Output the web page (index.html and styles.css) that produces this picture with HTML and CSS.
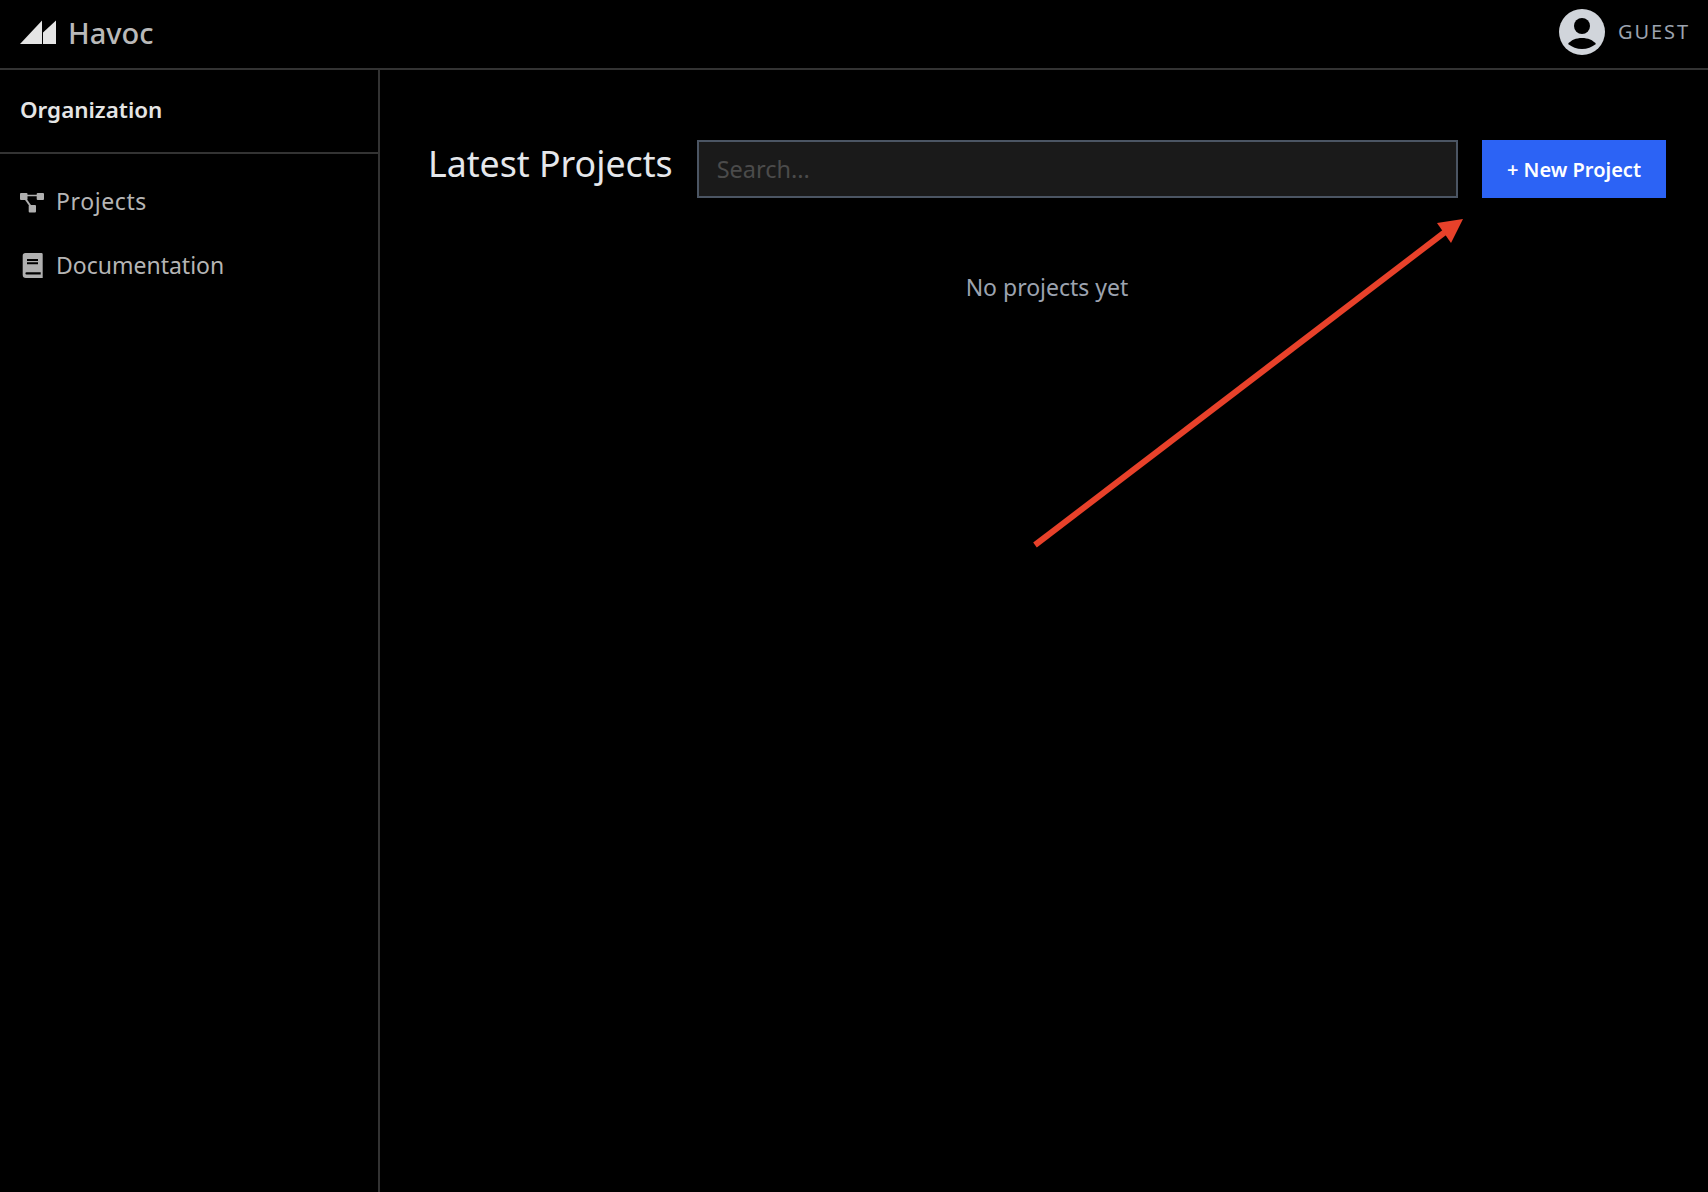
FILE: index.html
```html
<!DOCTYPE html>
<html lang="en">
<head>
<meta charset="utf-8">
<title>Havoc</title>
<link rel="stylesheet" href="styles.css">
</head>
<body>
<header class="topbar">
  <div class="brand">
    <svg class="brand-logo" viewBox="0 0 36 24" width="36" height="24" aria-hidden="true">
      <polygon points="0,24 22,0.500 22,24" fill="#e5e5e5"/>
      <polygon points="23,24 23,12.500 36,0.500 36,24" fill="#e5e5e5"/>
    </svg>
    <span class="brand-name">Havoc</span>
  </div>
  <div class="user">
    <svg class="user-icon" viewBox="0 0 46 46" width="46" height="46" aria-hidden="true">
      <circle cx="23" cy="23" r="23" fill="#d1d5db"/>
      <circle cx="23" cy="17" r="8" fill="#000"/>
      <path d="M9 35 C12 31 17 29 23 29 C29 29 34 31 37 35 C33 38 28 40 23 40 C18 40 13 38 9 35 Z" fill="#000"/>
    </svg>
    <span class="user-name">GUEST</span>
  </div>
</header>
<div class="layout">
  <aside class="sidebar">
    <div class="org">Organization</div>
    <nav class="nav">
      <a class="nav-item">
        <svg class="nav-icon" viewBox="0 0 24 24" width="24" height="24" aria-hidden="true">
          <path d="M5 6.500 L20 6.500" stroke="#b0b0b0" stroke-width="1.500" fill="none"/>
          <path d="M5.500 10 L10.500 17" stroke="#b0b0b0" stroke-width="2" fill="none"/>
          <rect x="0" y="4" width="7.500" height="7" rx="1" fill="#b0b0b0"/>
          <rect x="16.700" y="4" width="7.300" height="7" rx="1" fill="#b0b0b0"/>
          <rect x="8.700" y="16" width="7.300" height="7.500" rx="1" fill="#b0b0b0"/>
        </svg>
        <span class="nav-label-short">Projects</span>
      </a>
      <a class="nav-item">
        <svg class="nav-icon" viewBox="0 0 24 26" width="24" height="26" aria-hidden="true">
          <path fill-rule="evenodd" d="M5.500 1 H21.500 A1.200 1.200 0 0 1 22.700 2.200 V26 H6 A3.300 3.300 0 0 1 2.700 22.700 V3.800 A2.800 2.800 0 0 1 5.500 1 Z M7 7 V9 H18 V7 Z M7 10.300 V12.300 H18 V10.300 Z M6.500 20.300 A1.100 1.100 0 0 0 6.500 22.500 H20.700 V20.300 Z" fill="#b0b0b0"/>
        </svg>
        <span>Documentation</span>
      </a>
    </nav>
  </aside>
  <main class="content">
    <div class="toolbar">
      <h1 class="title">Latest Projects</h1>
      <input class="search" type="text" placeholder="Search...">
      <button class="new-btn" type="button">+ New Project</button>
    </div>
    <p class="empty">No projects yet</p>
  </main>
</div>
<svg class="arrow" viewBox="0 0 1708 1192" width="1708" height="1192" aria-hidden="true">
  <line x1="1035" y1="545" x2="1449" y2="229" stroke="#e8412a" stroke-width="6"/>
  <polygon points="1463,219 1437,223 1451,243" fill="#e8412a"/>
</svg>
</body>
</html>
```
FILE: styles.css
```css
* { box-sizing: border-box; }
html, body { height: 100%; }
body {
  margin: 0;
  background: #000;
  color: #e5e7eb;
  font-family: "Noto Sans", "Open Sans", sans-serif;
  overflow: hidden;
  display: flex;
  flex-direction: column;
}
.topbar {
  height: 70px;
  flex: none;
  display: flex;
  align-items: center;
  justify-content: space-between;
  padding: 0 18px 4px 20px;
  border-bottom: 2px solid #333;
}
.brand { display: flex; align-items: center; gap: 12px; }
.brand-logo { display: block; }
.brand-name { font-size: 29px; font-weight: 500; color: #b9b9b9; line-height: 1; }
.user { display: flex; align-items: center; gap: 13px; }
.user-icon { display: block; }
.user-name { font-size: 20px; line-height: 1; letter-spacing: 1.900px; color: #9ca3af; }
.layout { flex: 1; display: flex; min-height: 0; }
.sidebar { width: 380px; flex: none; border-right: 2px solid #333; }
.org {
  height: 84px;
  padding: 0 20px 4px;
  display: flex;
  align-items: center;
  font-size: 22.400px;
  font-weight: 600;
  color: #e5e5e5;
  border-bottom: 2px solid #333;
}
.nav { display: flex; flex-direction: column; gap: 24px; padding: 27px 20px 0; }
.nav-item { display: flex; align-items: center; gap: 12px; height: 40px; font-size: 23px; line-height: 38px; color: #b5b5b5; }
.nav-label-short { letter-spacing: 0.600px; }
.nav-icon { display: block; flex: none; }
.content { flex: 1; padding: 70px 42px 0 48px; min-width: 0; }
.toolbar { display: flex; align-items: flex-start; gap: 24px; }
.title { margin: 0; font-size: 35.700px; line-height: 46px; font-weight: 400; color: #e5e7eb; white-space: nowrap; }
.search {
  flex: 1;
  min-width: 0;
  height: 58px;
  background: #1a1a1a;
  border: 2px solid #4b5563;
  padding: 0 18px;
  font: 400 23.500px "Noto Sans", sans-serif;
  color: #e5e7eb;
  outline: none;
  border-radius: 0;
}
.search::placeholder { color: #4b4b4b; opacity: 1; }
.new-btn {
  width: 184px;
  height: 58px;
  flex: none;
  background: #2c63f5;
  border: 0;
  color: #fff;
  font: 600 20px "Noto Sans", sans-serif;
  padding: 0;
}
.empty { margin: 72px 0 0; text-align: center; font-size: 23px; line-height: 34px; color: #9ca3af; }
.arrow { position: absolute; top: 0; left: 0; pointer-events: none; }
```
